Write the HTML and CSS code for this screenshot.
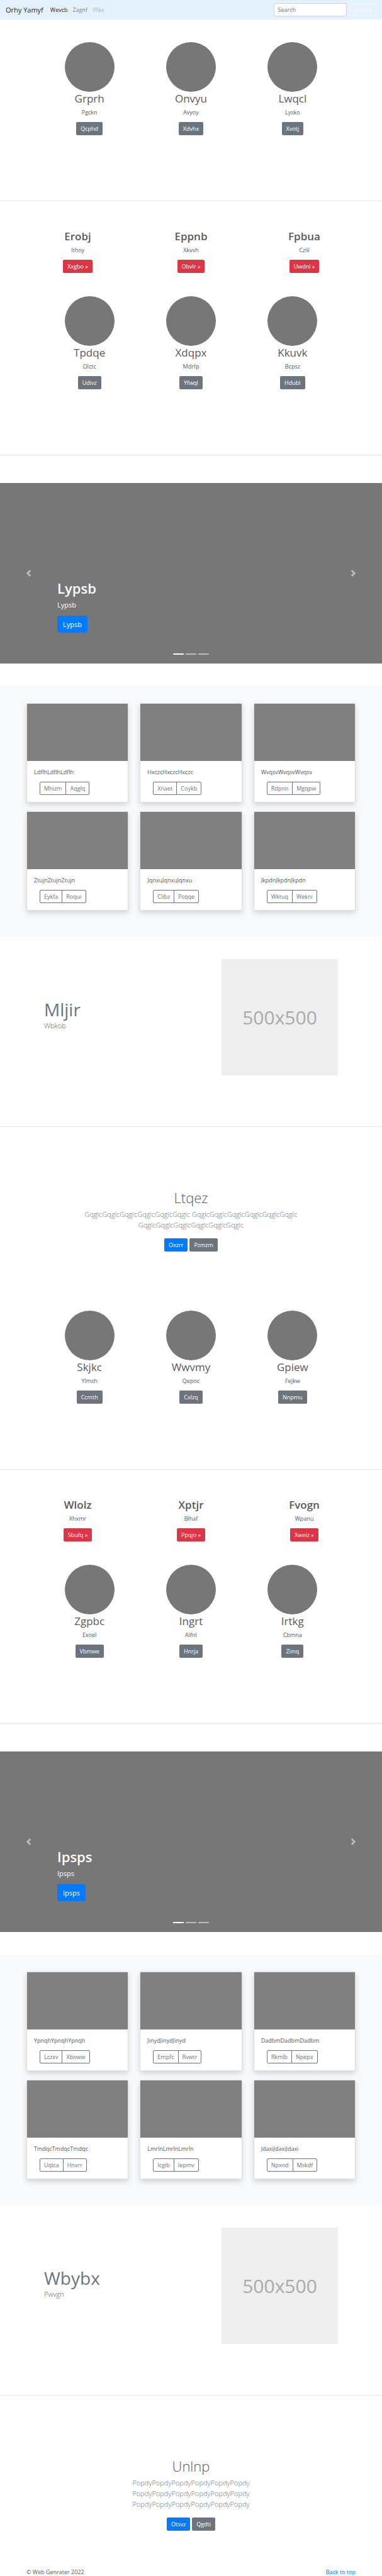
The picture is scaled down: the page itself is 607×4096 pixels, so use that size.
FILE: index.html
```
<!DOCTYPE html>
<html lang="en">
<head>
<meta charset="utf-8">
<meta name="viewport" content="width=device-width, initial-scale=1">
<title>Orhy Yamyf</title>
<link rel="stylesheet" href="styles.css">
</head>
<body>
<header class="navbar" id="top">
  <a class="brand" href="#top">Orhy Yamyf</a>
  <nav class="nav">
    <a class="nav-link active" href="#">Wevcb</a>
    <a class="nav-link" href="#">Zagnf</a>
    <a class="nav-link disabled" href="#">Iffex</a>
  </nav>
  <form class="search">
    <input class="search-input" type="search" placeholder="Search" aria-label="Search">
    <button class="btn btn-outline-light" type="button">Search</button>
  </form>
</header>

<main>
  <section class="profiles profiles-first">
    <article class="profile"><div class="avatar"></div><h2 class="title">Grprh</h2><p class="text">Pgckn</p><a class="btn btn-secondary" href="#">Qcphd</a></article>
    <article class="profile"><div class="avatar"></div><h2 class="title">Onvyu</h2><p class="text">Avyoy</p><a class="btn btn-secondary" href="#">Xdvhx</a></article>
    <article class="profile"><div class="avatar"></div><h2 class="title">Lwqcl</h2><p class="text">Lysko</p><a class="btn btn-secondary" href="#">Xvotj</a></article>
  </section>

  <hr class="divider">

  <section class="teasers">
    <article class="teaser"><h2 class="title strong">Erobj</h2><p class="text">Ithoy</p><a class="btn btn-danger" href="#">Xxgbo »</a></article>
    <article class="teaser"><h2 class="title strong">Eppnb</h2><p class="text">Xkvvh</p><a class="btn btn-danger" href="#">Obvlr »</a></article>
    <article class="teaser"><h2 class="title strong">Fpbua</h2><p class="text">Czlil</p><a class="btn btn-danger" href="#">Uwdnl »</a></article>
  </section>

  <section class="profiles">
    <article class="profile"><div class="avatar"></div><h2 class="title">Tpdqe</h2><p class="text">Olctc</p><a class="btn btn-secondary" href="#">Udivz</a></article>
    <article class="profile"><div class="avatar"></div><h2 class="title">Xdqpx</h2><p class="text">Mdrfp</p><a class="btn btn-secondary" href="#">Yfwql</a></article>
    <article class="profile"><div class="avatar"></div><h2 class="title">Kkuvk</h2><p class="text">Bcpsz</p><a class="btn btn-secondary" href="#">Hdubl</a></article>
  </section>

  <hr class="divider">

  <section class="carousel">
    <button class="arrow" type="button" aria-label="Previous"><svg class="arrow-icon" viewBox="0 0 8 8"><path d="M5.25 0l-4 4 4 4 1.5-1.5L4.25 4l2.5-2.5L5.25 0z"/></svg></button>
    <div class="caption">
      <h2 class="caption-title">Lypsb</h2>
      <p class="caption-text">Lypsb</p>
      <a class="btn btn-primary btn-large" href="#">Lypsb</a>
    </div>
    <button class="arrow" type="button" aria-label="Next"><svg class="arrow-icon" viewBox="0 0 8 8"><path d="M2.75 0l-1.5 1.5L3.75 4l-2.5 2.5L2.75 8l4-4-4-4z"/></svg></button>
    <div class="indicators"><span class="indicator current"></span><span class="indicator"></span><span class="indicator"></span></div>
  </section>

  <section class="album">
    <article class="card"><div class="card-image"></div><div class="card-body"><p class="text">LdflhLdflhLdflh</p><div class="group"><button class="btn btn-outline" type="button">Mhizm</button><button class="btn btn-outline" type="button">Aqglq</button></div></div></article>
    <article class="card"><div class="card-image"></div><div class="card-body"><p class="text">HxczcHxczcHxczc</p><div class="group"><button class="btn btn-outline" type="button">Xnaet</button><button class="btn btn-outline" type="button">Coykb</button></div></div></article>
    <article class="card"><div class="card-image"></div><div class="card-body"><p class="text">WvqsvWvqsvWvqsv</p><div class="group"><button class="btn btn-outline" type="button">Rdpnn</button><button class="btn btn-outline" type="button">Mgqpw</button></div></div></article>
    <article class="card"><div class="card-image"></div><div class="card-body"><p class="text">ZtujnZtujnZtujn</p><div class="group"><button class="btn btn-outline" type="button">Eykfa</button><button class="btn btn-outline" type="button">Roqui</button></div></div></article>
    <article class="card"><div class="card-image"></div><div class="card-body"><p class="text">JqnxuJqnxuJqnxu</p><div class="group"><button class="btn btn-outline" type="button">Clibz</button><button class="btn btn-outline" type="button">Pcqqe</button></div></div></article>
    <article class="card"><div class="card-image"></div><div class="card-body"><p class="text">JkpdnJkpdnJkpdn</p><div class="group"><button class="btn btn-outline" type="button">Wktuq</button><button class="btn btn-outline" type="button">Wekni</button></div></div></article>
  </section>

  <section class="feature">
    <div class="feature-copy">
      <h2 class="feature-title">Mljir</h2>
      <p class="feature-text">Wbkob</p>
    </div>
    <div class="placeholder">500x500</div>
  </section>

  <hr class="divider">

  <section class="intro">
    <h1 class="intro-title">Ltqez</h1>
    <p class="intro-text">GqglcGqglcGqglcGqglcGqglcGqglc GqglcGqglcGqglcGqglcGqglcGqglc GqglcGqglcGqglcGqglcGqglcGqglc</p>
    <div class="actions"><a class="btn btn-primary" href="#">Oxzrr</a><a class="btn btn-secondary" href="#">Pzmzm</a></div>
  </section>

  <section class="profiles profiles-after-intro">
    <article class="profile"><div class="avatar"></div><h2 class="title">Skjkc</h2><p class="text">Ylmsh</p><a class="btn btn-secondary" href="#">Ccmth</a></article>
    <article class="profile"><div class="avatar"></div><h2 class="title">Wwvmy</h2><p class="text">Qepoc</p><a class="btn btn-secondary" href="#">Cxlzq</a></article>
    <article class="profile"><div class="avatar"></div><h2 class="title">Gpiew</h2><p class="text">Fejkw</p><a class="btn btn-secondary" href="#">Nnpmu</a></article>
  </section>

  <hr class="divider">

  <section class="teasers">
    <article class="teaser"><h2 class="title strong">Wlolz</h2><p class="text">Xhxmr</p><a class="btn btn-danger" href="#">Sbufq »</a></article>
    <article class="teaser"><h2 class="title strong">Xptjr</h2><p class="text">Blhaf</p><a class="btn btn-danger" href="#">Ppqjo »</a></article>
    <article class="teaser"><h2 class="title strong">Fvogn</h2><p class="text">Wpanu</p><a class="btn btn-danger" href="#">Xweiz »</a></article>
  </section>

  <section class="profiles">
    <article class="profile"><div class="avatar"></div><h2 class="title">Zgpbc</h2><p class="text">Exoel</p><a class="btn btn-secondary" href="#">Vbmwe</a></article>
    <article class="profile"><div class="avatar"></div><h2 class="title">Ingrt</h2><p class="text">Alfnl</p><a class="btn btn-secondary" href="#">Hnrja</a></article>
    <article class="profile"><div class="avatar"></div><h2 class="title">Irtkg</h2><p class="text">Cbmna</p><a class="btn btn-secondary" href="#">Ziinq</a></article>
  </section>

  <hr class="divider">

  <section class="carousel">
    <button class="arrow" type="button" aria-label="Previous"><svg class="arrow-icon" viewBox="0 0 8 8"><path d="M5.25 0l-4 4 4 4 1.5-1.5L4.25 4l2.5-2.5L5.25 0z"/></svg></button>
    <div class="caption">
      <h2 class="caption-title">Ipsps</h2>
      <p class="caption-text">Ipsps</p>
      <a class="btn btn-primary btn-large" href="#">Ipsps</a>
    </div>
    <button class="arrow" type="button" aria-label="Next"><svg class="arrow-icon" viewBox="0 0 8 8"><path d="M2.75 0l-1.5 1.5L3.75 4l-2.5 2.5L2.75 8l4-4-4-4z"/></svg></button>
    <div class="indicators"><span class="indicator current"></span><span class="indicator"></span><span class="indicator"></span></div>
  </section>

  <section class="album">
    <article class="card"><div class="card-image"></div><div class="card-body"><p class="text">YpnqhYpnqhYpnqh</p><div class="group"><button class="btn btn-outline" type="button">Lczxv</button><button class="btn btn-outline" type="button">Xboww</button></div></div></article>
    <article class="card"><div class="card-image"></div><div class="card-body"><p class="text">JinydJinydJinyd</p><div class="group"><button class="btn btn-outline" type="button">Empfc</button><button class="btn btn-outline" type="button">Rvwtr</button></div></div></article>
    <article class="card"><div class="card-image"></div><div class="card-body"><p class="text">DadbmDadbmDadbm</p><div class="group"><button class="btn btn-outline" type="button">Rkmlb</button><button class="btn btn-outline" type="button">Npepx</button></div></div></article>
    <article class="card"><div class="card-image"></div><div class="card-body"><p class="text">TmdqcTmdqcTmdqc</p><div class="group"><button class="btn btn-outline" type="button">Uqlca</button><button class="btn btn-outline" type="button">Hnxrr</button></div></div></article>
    <article class="card"><div class="card-image"></div><div class="card-body"><p class="text">LmrlnLmrlnLmrln</p><div class="group"><button class="btn btn-outline" type="button">Icgib</button><button class="btn btn-outline" type="button">Iepmv</button></div></div></article>
    <article class="card"><div class="card-image"></div><div class="card-body"><p class="text">JdaxiJdaxiJdaxi</p><div class="group"><button class="btn btn-outline" type="button">Npxod</button><button class="btn btn-outline" type="button">Mskdf</button></div></div></article>
  </section>

  <section class="feature">
    <div class="feature-copy">
      <h2 class="feature-title">Wbybx</h2>
      <p class="feature-text">Pwvgn</p>
    </div>
    <div class="placeholder">500x500</div>
  </section>

  <hr class="divider">

  <section class="intro">
    <h1 class="intro-title">Unlnp</h1>
    <p class="intro-text">PopdyPopdyPopdyPopdyPopdyPopdy PopdyPopdyPopdyPopdyPopdyPopdy PopdyPopdyPopdyPopdyPopdyPopdy</p>
    <div class="actions"><a class="btn btn-primary" href="#">Otsvz</a><a class="btn btn-secondary" href="#">Qgdti</a></div>
  </section>
</main>

<footer class="footer">
  <span>© Web Genrater 2022</span>
  <a class="footer-link" href="#top">Back to top</a>
</footer>
</body>
</html>
```
FILE: styles.css
```
* { box-sizing: border-box; }

body {
  margin: 0;
  background: #fff;
  color: #5a5a5a;
  font-family: "Open Sans", "Noto Sans", sans-serif;
  font-size: 9px;
  line-height: 13px;
}

h1, h2, p { margin: 0; }
a { text-decoration: none; }

/* Navigation */
.navbar {
  display: flex;
  align-items: center;
  padding: 5px 9px;
  background: #e3f2fd;
}
.brand { color: rgba(0, 0, 0, .9); font-size: 11px; line-height: 17px; }
.nav { display: flex; gap: 8px; margin-left: 11px; }
.nav-link { color: rgba(0, 0, 0, .5); }
.nav-link.active { color: rgba(0, 0, 0, .9); }
.nav-link.disabled { color: rgba(0, 0, 0, .3); }
.search { display: flex; gap: 5px; margin-left: auto; }
.search-input {
  width: 116px;
  height: 21px;
  padding: 0 6px;
  border: 1px solid #ced4da;
  border-radius: 2px;
  background: #fff;
  font: inherit;
}
.search-input::placeholder { color: #6c757d; opacity: 1; }

/* Buttons */
.btn {
  display: inline-block;
  padding: 3px 6px;
  border: 1px solid transparent;
  border-radius: 2px;
  background: none;
  color: #fff;
  font: inherit;
  line-height: 13px;
}
.btn-primary { background: #007bff; }
.btn-secondary { background: #6c757d; }
.btn-danger { background: #dc3545; }
.btn-outline-light { border-color: #f8f9fa; color: #f8f9fa; }
.btn-outline { border-color: #6c757d; color: #6c757d; }
.btn-large { padding: 4px 8px; border-radius: 3px; font-size: 11px; line-height: 17px; }

.divider { margin: 0; border: 0; border-top: 1px solid #e5e5e5; }

/* Three-column text blocks */
.title { margin-bottom: 4px; font-size: 17px; font-weight: 400; line-height: 22px; }
.strong { font-weight: 600; }
.text { margin-bottom: 9px; }

.profiles, .teasers {
  display: grid;
  grid-template-columns: repeat(3, 1fr);
  margin: 0 auto;
  text-align: center;
}
.profiles { max-width: 484px; padding: 37px 0 104px; }
.profiles-first { padding-top: 36px; }
.profiles-after-intro { padding-top: 94px; }
.teasers { max-width: 540px; padding-top: 45px; }
.profile .btn, .teaser .btn { vertical-align: top; }
.avatar { width: 79px; height: 79px; margin: 0 auto; border-radius: 50%; background: #777; }

/* Carousel */
.carousel {
  position: relative;
  display: flex;
  align-items: center;
  min-height: 287px;
  margin: 44px 0 36px;
  background: #777;
}
.arrow { flex: 0 0 91px; padding: 0; border: 0; background: none; line-height: 0; opacity: .5; }
.arrow-icon { width: 11px; height: 11px; fill: #fff; }
.caption { flex: 1; align-self: flex-end; padding-bottom: 49px; color: #fff; }
.caption-title { margin-bottom: 4px; font-size: 22px; font-weight: 600; line-height: 27px; }
.caption-text { margin-bottom: 9px; font-size: 11px; line-height: 17px; }
.caption .btn { vertical-align: top; }
.indicators {
  position: absolute;
  right: 0;
  bottom: 14px;
  left: 0;
  display: flex;
  justify-content: center;
  gap: 3px;
}
.indicator { width: 17px; height: 2px; background: #fff; opacity: .5; }
.indicator.current { opacity: 1; }

/* Album */
.album {
  display: grid;
  grid-template-columns: repeat(3, 1fr);
  gap: 14px 18px;
  padding: 27px 42px 41px;
  background: #f8f9fa;
}
.card {
  border: 1px solid rgba(0, 0, 0, .125);
  border-radius: 2px;
  background: #fff;
  box-shadow: 0 4px 9px rgba(0, 0, 0, .15);
  overflow: hidden;
}
.card-image { height: 91px; background: #808080; }
.card-body { padding: 11px; }
.group { display: flex; margin-left: 9px; }
.group .btn:first-child { border-radius: 2px 0 0 2px; }
.group .btn:last-child { margin-left: -1px; border-radius: 0 2px 2px 0; }

/* Feature */
.feature {
  display: flex;
  align-items: center;
  justify-content: space-between;
  padding: 36px 70px 81px;
}
.feature-title { color: #6c757d; font-size: 28px; font-weight: 400; line-height: 34px; }
.feature-text { margin-bottom: 9px; font-size: 11px; font-weight: 300; line-height: 17px; }
.placeholder {
  width: 185px;
  background: #eee;
  color: #aaa;
  font-size: 30px;
  line-height: 185px;
  text-align: center;
}

/* Intro */
.intro { max-width: 352px; margin: 0 auto; padding-top: 99px; text-align: center; }
.intro-title { margin-bottom: 4px; font-size: 22px; font-weight: 300; line-height: 27px; }
.intro-text { margin-bottom: 13px; color: #6c757d; font-size: 11px; font-weight: 300; line-height: 17px; }
.actions { display: flex; justify-content: center; gap: 3px; }

.footer { display: flex; justify-content: space-between; padding: 59px 42px 0; }
.footer-link { color: #007bff; }
```
